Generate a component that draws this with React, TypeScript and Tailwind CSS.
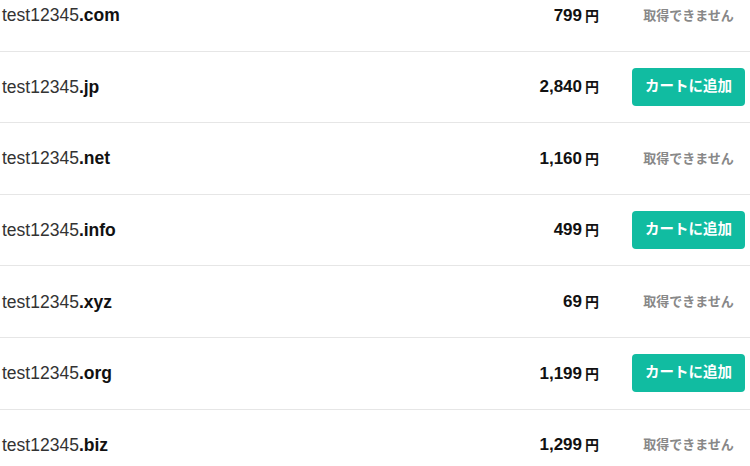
import React from "react";

interface Domain {
  name: string;
  tld: string;
  price: string;
  available: boolean;
}

const domains: Domain[] = [
  { name: "test12345", tld: ".com", price: "799", available: false },
  { name: "test12345", tld: ".jp", price: "2,840", available: true },
  { name: "test12345", tld: ".net", price: "1,160", available: false },
  { name: "test12345", tld: ".info", price: "499", available: true },
  { name: "test12345", tld: ".xyz", price: "69", available: false },
  { name: "test12345", tld: ".org", price: "1,199", available: true },
  { name: "test12345", tld: ".biz", price: "1,299", available: false },
];

function DomainRow({ d }: { d: Domain }) {
  return (
    <li className="flex items-center h-[71.6px] border-b border-[#e6e6e6] pl-[2px] pr-[5px]">
      <span className="flex-1 text-[17.5px] text-[#333]">
        {d.name}
        <span className="font-bold text-[#111]">{d.tld}</span>
      </span>
      <span className="font-bold text-[#111] text-[17px] mr-[33px]">
        {d.price}
        <span className="text-[14px] ml-[3px]">円</span>
      </span>
      <div className="w-[113px] flex justify-center">
        {d.available ? (
          <button className="w-full h-[38px] rounded-[4px] bg-[#11bca1] text-white text-[14.5px] font-bold">
            カートに追加
          </button>
        ) : (
          <span className="text-[13px] font-bold text-[#888]">取得できません</span>
        )}
      </div>
    </li>
  );
}

export default function App() {
  return (
    <div
      className="w-[750px] h-[466px] overflow-hidden bg-white"
      style={{ fontFamily: '"Liberation Sans", Arial, "Noto Sans CJK JP", sans-serif' }}
    >
      <ul className="-mt-[20px]">
        {domains.map((d) => (
          <DomainRow key={d.tld} d={d} />
        ))}
      </ul>
    </div>
  );
}
